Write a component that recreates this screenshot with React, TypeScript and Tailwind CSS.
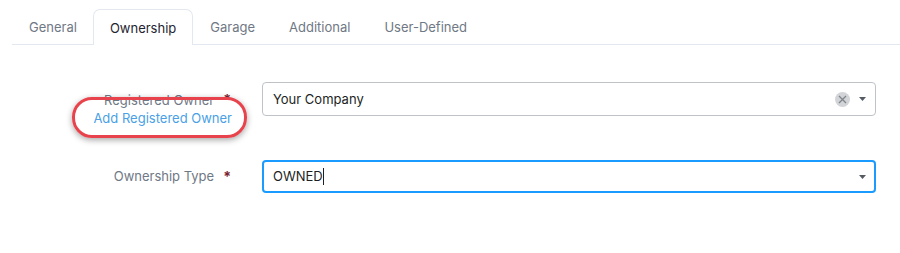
import { FC } from "react";

const tabs = ["General", "Ownership", "Garage", "Additional", "User-Defined"];

const Caret: FC = () => (
  <svg width="7" height="4" viewBox="0 0 7 4" className="ml-[9px]">
    <path d="M0 0 L7 0 L3.5 4 Z" fill="#555b63" />
  </svg>
);

const Star: FC = () => <span className="text-[#7a1f2f] ml-[9px] text-[14px] font-bold">*</span>;

export default function App() {
  return (
    <div
      className="w-[900px] h-[253px] bg-white text-[13px]"
      style={{ fontFamily: "Inter, 'Liberation Sans', sans-serif" }}
    >
      <div className="pt-[9px] pl-3">
        <div className="flex border-b border-[#e3e8ef] h-[36px]">
          {tabs.map((t, i) =>
            t === "Ownership" ? (
              <div
                key={t}
                className="px-[16px] pt-[2px] flex items-center text-[#1f2530] bg-white border border-b-0 border-[#e3e8ef] rounded-t-[7px] -mb-px h-[36px]"
              >
                {t}
              </div>
            ) : (
              <div
                key={t}
                className={
                  i === 0
                    ? "pl-[17px] pr-[16px] pt-[2px] flex items-center text-[#6f7885]"
                    : "px-[17px] pt-[2px] flex items-center text-[#6f7885]"
                }
              >
                {t}
              </div>
            )
          )}
        </div>
      </div>

      <div className="relative pt-[37px] flex flex-col gap-[44px]">
        <div className="flex items-start h-[34px]">
          <div className="w-[262px] pr-[31px] flex flex-col items-end pt-[9px]">
            <div className="flex items-center leading-[18px]">
              <span className="text-[#6f7885]">Registered Owner</span>
              <Star />
            </div>
            <a className="text-[#4a9fe6] leading-[19px] mr-[-1px]">Add Registered Owner</a>
          </div>
          <div className="w-[614px] h-[34px] border border-[#bfc3c8] rounded-[4px] flex items-center pl-[10px] pr-[9px] text-[#1c1f24]">
            <span className="flex-1 pt-[2px]">Your Company</span>
            <span className="w-[15px] h-[15px] rounded-full bg-[#d2d4d7] flex items-center justify-center">
              <svg width="9" height="9" viewBox="0 0 9 9">
                <path d="M1 1 L8 8 M8 1 L1 8" stroke="#80858c" strokeWidth="1.3" />
              </svg>
            </span>
            <Caret />
          </div>
        </div>

        <div className="flex items-center">
          <div className="w-[262px] pr-[31px] flex justify-end items-center">
            <span className="text-[#6f7885]">Ownership Type</span>
            <Star />
          </div>
          <div className="w-[614px] h-[33px] border-2 border-[#1a9bff] rounded-[4px] flex items-center pl-[9px] pr-[8px] text-[#1c1f24]">
            <span className="flex-1 flex items-center">
              OWNED<span className="inline-block w-px h-[17px] bg-[#1c1f24]" />
            </span>
            <Caret />
          </div>
        </div>

        <div className="absolute left-[72px] top-[52px] w-[175px] h-[41px] border-[3px] border-[#e8434c] rounded-[20px] shadow-[0_2px_6px_rgba(0,0,0,0.35)]" />
      </div>
    </div>
  );
}
